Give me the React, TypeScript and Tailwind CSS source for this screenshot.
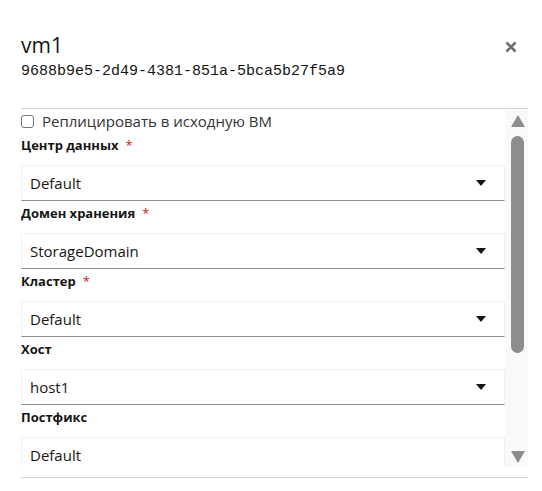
import React from 'react';

const fields = [
  { label: 'Центр данных', required: true, value: 'Default' },
  { label: 'Домен хранения', required: true, value: 'StorageDomain' },
  { label: 'Кластер', required: true, value: 'Default' },
  { label: 'Хост', required: false, value: 'host1' },
  { label: 'Постфикс', required: false, value: 'Default', plain: true },
];

const Caret = () => (
  <svg width="10" height="6" viewBox="0 0 10 6" className="shrink-0">
    <path d="M0 0 L10 0 L5 6 Z" fill="#151515" />
  </svg>
);

export default function App() {
  return (
    <div className="w-[542px] h-[491px] bg-white text-[#151515] font-['Open_Sans',sans-serif]">
      {/* Header */}
      <div className="flex justify-between pl-[21px] pr-[25px] pt-[31px]">
        <div>
          <h1 className="text-[21px] leading-[28px]">vm1</h1>
          <div className="mt-[3px] font-['Liberation_Mono',monospace] text-[15px] leading-5">
            9688b9e5-2d49-4381-851a-5bca5b27f5a9
          </div>
        </div>
        <button className="mt-[10px] h-3 w-3 flex items-center justify-center">
          <svg width="12" height="12" viewBox="0 0 12 12">
            <path d="M1.5 1.5 L10.5 10.5 M10.5 1.5 L1.5 10.5" stroke="#6a6e73" strokeWidth="2.6" />
          </svg>
        </button>
      </div>

      <div className="mt-[26px] ml-[21px] mr-[14px] border-t border-[#d2d2d2]" />

      {/* Body */}
      <div className="ml-[21px] mr-[14px] h-[358px] flex overflow-hidden">
        <div className="flex-1 min-w-0">
          <label className="h-6 flex items-center gap-[8px] text-[15px]">
            <span className="w-[13px] h-[13px] rounded-[3px] border border-[#767676] bg-white" />
            <span className="text-[#333]">Реплицировать в исходную ВМ</span>
          </label>
          {fields.map((f) => (
            <div key={f.label}>
              <div className="h-8 pt-[2px] leading-5 text-[13px] font-bold">
                {f.label}
                {f.required && <span className="ml-[7px] font-normal text-[#c9190b]">*</span>}
              </div>
              <div
                className={
                  'h-[36px] flex items-center justify-between pl-2 pr-[18px] border border-[#f0f0f0] text-[15px] ' +
                  (f.plain ? '' : 'border-b-[#8a8d90]')
                }
              >
                <span>{f.value}</span>
                {!f.plain && <Caret />}
              </div>
            </div>
          ))}
        </div>

        {/* Scrollbar */}
        <div className="w-[23px] bg-[#f9f9f9] flex flex-col items-center pl-[2px]">
          <svg width="14" height="12" viewBox="0 0 14 12" className="mt-[6px]">
            <path d="M7 0 L14 12 L0 12 Z" fill="#8d8d8d" />
          </svg>
          <div className="mt-[9px] w-[13px] h-[217px] rounded-full bg-[#8d8d8d]" />
          <div className="flex-1" />
          <svg width="14" height="12" viewBox="0 0 14 12" className="mb-[4px]">
            <path d="M0 0 L14 0 L7 12 Z" fill="#8d8d8d" />
          </svg>
        </div>
      </div>

      <div className="mt-[10px] ml-[21px] mr-[14px] border-t border-[#d2d2d2]" />
    </div>
  );
}
